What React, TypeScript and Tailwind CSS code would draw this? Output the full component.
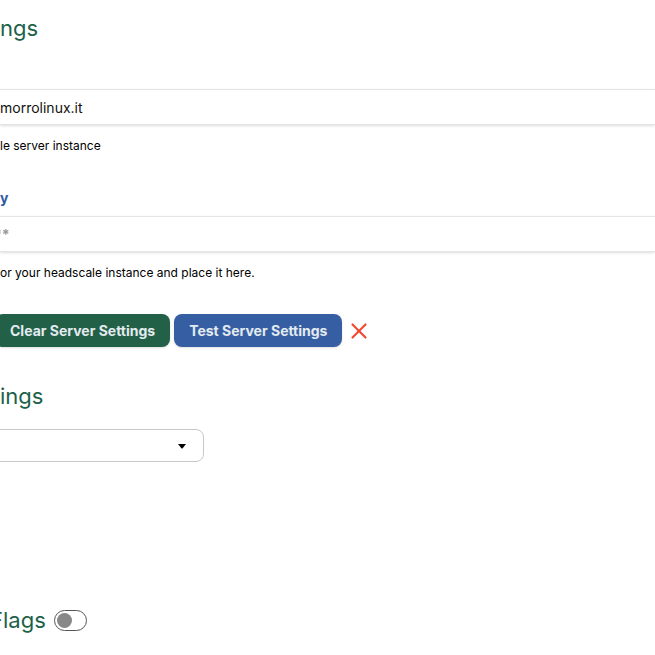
import React, { useState } from 'react';
import { X } from 'lucide-react';

interface TextFieldProps {
  id: string;
  label: string;
  hint: string;
  value?: string;
  placeholder?: string;
}

const TextField: React.FC<TextFieldProps> = ({ id, label, hint, value = '', placeholder }) => {
  const [text, setText] = useState(value);

  return (
    <div>
      <label htmlFor={id} className="block h-5 text-sm leading-5 font-bold text-[#2c5aa5]">
        {label}
      </label>
      <input
        id={id}
        type="text"
        value={text}
        placeholder={placeholder}
        onChange={(e) => setText(e.target.value)}
        className="mt-2 block h-9 w-full border-y border-[#e5e5e5] bg-white text-sm text-[#111] shadow-sm outline-none placeholder:-indent-1.5 placeholder:font-bold placeholder:text-[#999]"
      />
      <p className="mt-3 text-xs leading-[18px] text-black">{hint}</p>
    </div>
  );
};

const headingClass = 'text-[22px] leading-8 font-normal text-[#1c6148]';
const buttonClass = 'h-[33px] rounded-lg px-[15px] text-sm font-bold text-[#e4ebf0] shadow-sm';

export default function App() {
  const [enabled, setEnabled] = useState(false);

  return (
    <main className="min-h-screen overflow-hidden bg-white pt-3 font-['Inter',sans-serif]">
      <h1 className={headingClass}>ngs</h1>

      <div className="mt-[17px] space-y-[33px]">
        <TextField id="server-url" label="" hint="le server instance" value="morrolinux.it" />
        <TextField id="api-key" label="y" hint="or your headscale instance and place it here." placeholder="**" />
      </div>

      <div className="mt-8 -ml-[5px] flex items-center gap-1">
        <button type="button" className={`${buttonClass} bg-[#226148]`}>
          Clear Server Settings
        </button>
        <button type="button" className={`${buttonClass} bg-[#365fa3]`}>
          Test Server Settings
        </button>
        <X className="h-[26px] w-[26px] text-[#f04a32]" strokeWidth={2} aria-hidden="true" />
      </div>

      <h2 className={`${headingClass} mt-[33px]`}>ings</h2>
      <div className="relative mt-[17px] -ml-2 w-[212px]">
        <select
          aria-label="ings"
          className="block h-[33px] w-full appearance-none rounded-lg border border-[#c8c8c8] bg-white px-3 text-sm"
        >
          <option value=""></option>
        </select>
        <svg viewBox="0 0 8 5" className="pointer-events-none absolute top-[15px] right-[18px] h-[5px] w-2" aria-hidden="true">
          <path d="M0 0h8L4.6 4.2a.8.8 0 0 1-1.2 0z" fill="#000" />
        </svg>
      </div>

      <div className="mt-[142px] -ml-2.5 flex items-center gap-2">
        <h2 className={headingClass}>Flags</h2>
        <input
          type="checkbox"
          role="switch"
          aria-label="Flags"
          checked={enabled}
          onChange={(e) => setEnabled(e.target.checked)}
          className="flex h-[21px] w-[33px] appearance-none items-center rounded-full border border-[#555] bg-white px-0.5 before:h-[15px] before:w-[15px] before:rounded-full before:bg-[#888] checked:justify-end"
        />
      </div>
    </main>
  );
}
